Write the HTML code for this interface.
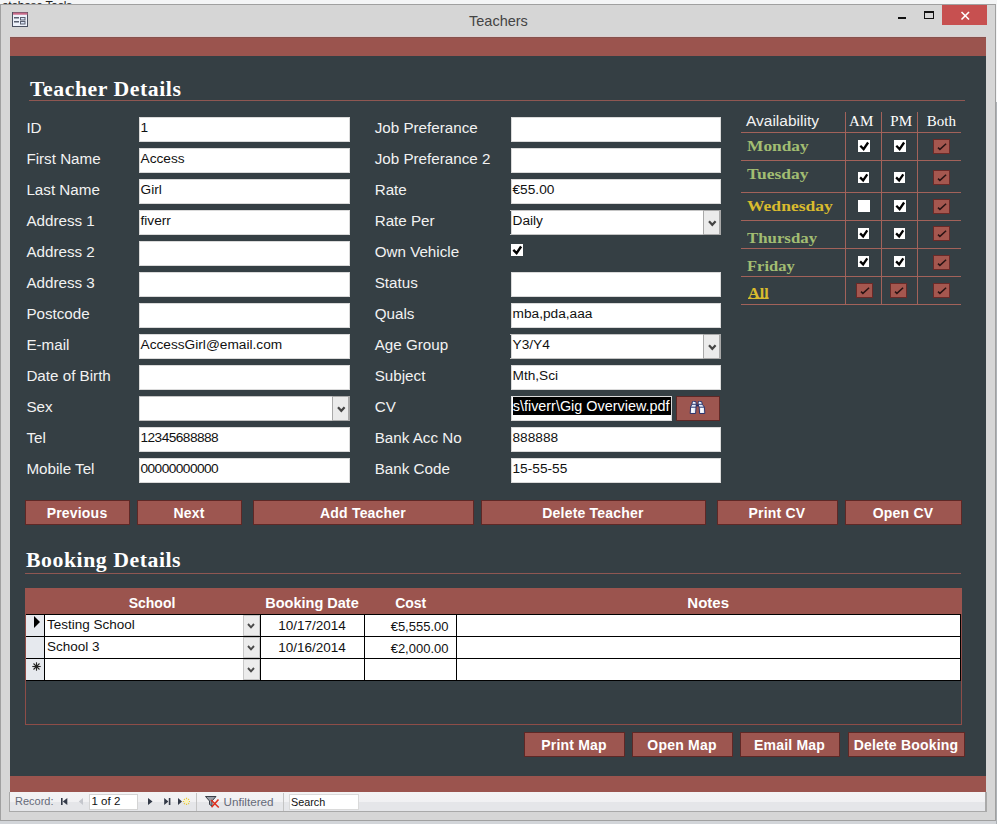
<!DOCTYPE html><html><head><meta charset="utf-8"><style>
html,body{margin:0;padding:0;width:997px;height:824px;overflow:hidden;position:relative;font-family:"Liberation Sans",sans-serif}
.b{position:absolute}
.t{position:absolute;white-space:nowrap;line-height:1}
</style></head><body>
<div class="b" style="left:0px;top:0px;width:997px;height:824px;background:#f4f5f6"></div>
<div class="t" style="left:2px;top:-0.36px;font-size:12px;font-family:'Liberation Sans', sans-serif;font-weight:normal;color:#222;letter-spacing:-0.3px">atabase Tools</div>
<div class="b" style="left:0px;top:4px;width:996px;height:817px;background:#d6d6d6;border:1px solid #9c9c9c;box-sizing:border-box"></div>
<div class="b" style="left:0px;top:821px;width:997px;height:3px;background:#d2d5d9"></div>
<div class="b" style="left:996px;top:102px;width:1px;height:722px;background:#aeb2b6"></div>
<div class="b" style="left:0px;top:4px;width:996px;height:817px;border:1px solid #a0a0a0;box-sizing:border-box"></div>
<div class="b" style="left:942px;top:5px;width:45px;height:20px;background:#c75050"></div>
<svg class="b" style="left:0;top:0" width="997" height="40"><g stroke="#fff" stroke-width="1.6"><line x1="961.5" y1="12" x2="969" y2="19.5"/><line x1="969" y1="12" x2="961.5" y2="19.5"/></g><rect x="898" y="17" width="8" height="2" fill="#111"/><rect x="924.5" y="11.5" width="9" height="7" fill="none" stroke="#111" stroke-width="1"/><rect x="924" y="11" width="10" height="2" fill="#111"/><rect x="12.5" y="12.5" width="15" height="14" fill="#eef2fb" stroke="#4a5060" stroke-width="1"/><rect x="13" y="12.5" width="14.5" height="2.2" fill="#c86a88"/><rect x="14" y="17" width="5" height="1.5" fill="#5a6070"/><rect x="14" y="21" width="5" height="1.5" fill="#5a6070"/><rect x="20.5" y="17.5" width="4.5" height="2.5" fill="#dde6f8" stroke="#5a6070"/><rect x="20.5" y="21.5" width="4.5" height="2.5" fill="#dde6f8" stroke="#5a6070"/></svg>
<div class="t" style="left:469px;top:13.73px;font-size:14.5px;font-family:'Liberation Sans', sans-serif;font-weight:normal;color:#444;">Teachers</div>
<div class="b" style="left:10px;top:36px;width:976px;height:1px;background:#dccfd0"></div>
<div class="b" style="left:10px;top:37px;width:976px;height:19px;background:#9b544e"></div>
<div class="b" style="left:10px;top:37px;width:976px;height:1px;background:#86524d"></div>
<div class="b" style="left:10px;top:56px;width:976px;height:720px;background:#353f44"></div>
<div class="b" style="left:10px;top:776px;width:976px;height:16px;background:#9b544e"></div>
<div class="t" style="left:30px;top:78.78px;font-size:21.75px;font-family:'Liberation Serif', serif;font-weight:bold;color:#fff;letter-spacing:0.55px">Teacher Details</div>
<div class="b" style="left:29px;top:100px;width:936px;height:1px;background:#8f5752"></div>
<div class="t" style="left:26.4px;top:120.03px;font-size:15.2px;font-family:'Liberation Sans', sans-serif;font-weight:normal;color:#f2f2f2;">ID</div>
<div class="b" style="left:139px;top:117px;width:211px;height:25px;background:#fff;border:1px solid #dadada;box-sizing:border-box"></div>
<div class="t" style="left:140.5px;top:120.70px;font-size:13.7px;font-family:'Liberation Sans', sans-serif;font-weight:normal;color:#111;">1</div>
<div class="t" style="left:26.4px;top:151.03px;font-size:15.2px;font-family:'Liberation Sans', sans-serif;font-weight:normal;color:#f2f2f2;">First Name</div>
<div class="b" style="left:139px;top:148px;width:211px;height:25px;background:#fff;border:1px solid #dadada;box-sizing:border-box"></div>
<div class="t" style="left:140.5px;top:151.70px;font-size:13.7px;font-family:'Liberation Sans', sans-serif;font-weight:normal;color:#111;">Access</div>
<div class="t" style="left:26.4px;top:182.03px;font-size:15.2px;font-family:'Liberation Sans', sans-serif;font-weight:normal;color:#f2f2f2;">Last Name</div>
<div class="b" style="left:139px;top:179px;width:211px;height:25px;background:#fff;border:1px solid #dadada;box-sizing:border-box"></div>
<div class="t" style="left:140.5px;top:182.70px;font-size:13.7px;font-family:'Liberation Sans', sans-serif;font-weight:normal;color:#111;">Girl</div>
<div class="t" style="left:26.4px;top:213.03px;font-size:15.2px;font-family:'Liberation Sans', sans-serif;font-weight:normal;color:#f2f2f2;">Address 1</div>
<div class="b" style="left:139px;top:210px;width:211px;height:25px;background:#fff;border:1px solid #dadada;box-sizing:border-box"></div>
<div class="t" style="left:140.5px;top:213.70px;font-size:13.7px;font-family:'Liberation Sans', sans-serif;font-weight:normal;color:#111;">fiverr</div>
<div class="t" style="left:26.4px;top:244.03px;font-size:15.2px;font-family:'Liberation Sans', sans-serif;font-weight:normal;color:#f2f2f2;">Address 2</div>
<div class="b" style="left:139px;top:241px;width:211px;height:25px;background:#fff;border:1px solid #dadada;box-sizing:border-box"></div>
<div class="t" style="left:26.4px;top:275.03px;font-size:15.2px;font-family:'Liberation Sans', sans-serif;font-weight:normal;color:#f2f2f2;">Address 3</div>
<div class="b" style="left:139px;top:272px;width:211px;height:25px;background:#fff;border:1px solid #dadada;box-sizing:border-box"></div>
<div class="t" style="left:26.4px;top:306.03px;font-size:15.2px;font-family:'Liberation Sans', sans-serif;font-weight:normal;color:#f2f2f2;">Postcode</div>
<div class="b" style="left:139px;top:303px;width:211px;height:25px;background:#fff;border:1px solid #dadada;box-sizing:border-box"></div>
<div class="t" style="left:26.4px;top:337.03px;font-size:15.2px;font-family:'Liberation Sans', sans-serif;font-weight:normal;color:#f2f2f2;">E-mail</div>
<div class="b" style="left:139px;top:334px;width:211px;height:25px;background:#fff;border:1px solid #dadada;box-sizing:border-box"></div>
<div class="t" style="left:140.5px;top:337.70px;font-size:13.7px;font-family:'Liberation Sans', sans-serif;font-weight:normal;color:#111;">AccessGirl@email.com</div>
<div class="t" style="left:26.4px;top:368.03px;font-size:15.2px;font-family:'Liberation Sans', sans-serif;font-weight:normal;color:#f2f2f2;">Date of Birth</div>
<div class="b" style="left:139px;top:365px;width:211px;height:25px;background:#fff;border:1px solid #dadada;box-sizing:border-box"></div>
<div class="t" style="left:26.4px;top:399.03px;font-size:15.2px;font-family:'Liberation Sans', sans-serif;font-weight:normal;color:#f2f2f2;">Sex</div>
<div class="b" style="left:139px;top:396px;width:211px;height:25px;background:#fff;border:1px solid #dadada;box-sizing:border-box"></div>
<div class="b" style="left:139px;top:396px;width:211px;height:25px;border-top:1px solid #c4c4c4;border-bottom:1px solid #c4c4c4;box-sizing:border-box"></div>
<div class="b" style="left:332px;top:396px;width:18px;height:25px;background:#ebebeb;border:1px solid #a9a9a9;border-right-width:2px;box-sizing:border-box"></div>
<svg class="b" style="left:336.5px;top:405.5px" width="9" height="8"><path d="M1 1.2 L4.3 4.8 L7.6 1.2" fill="none" stroke="#444" stroke-width="2.2"/></svg>
<div class="t" style="left:26.4px;top:430.03px;font-size:15.2px;font-family:'Liberation Sans', sans-serif;font-weight:normal;color:#f2f2f2;">Tel</div>
<div class="b" style="left:139px;top:427px;width:211px;height:25px;background:#fff;border:1px solid #dadada;box-sizing:border-box"></div>
<div class="t" style="left:140.5px;top:430.70px;font-size:13.7px;font-family:'Liberation Sans', sans-serif;font-weight:normal;color:#111;letter-spacing:-0.55px">12345688888</div>
<div class="t" style="left:26.4px;top:461.03px;font-size:15.2px;font-family:'Liberation Sans', sans-serif;font-weight:normal;color:#f2f2f2;">Mobile Tel</div>
<div class="b" style="left:139px;top:458px;width:211px;height:25px;background:#fff;border:1px solid #dadada;box-sizing:border-box"></div>
<div class="t" style="left:140.5px;top:461.70px;font-size:13.7px;font-family:'Liberation Sans', sans-serif;font-weight:normal;color:#111;letter-spacing:-0.55px">00000000000</div>
<div class="t" style="left:374.7px;top:120.03px;font-size:15.2px;font-family:'Liberation Sans', sans-serif;font-weight:normal;color:#f2f2f2;">Job Preferance</div>
<div class="b" style="left:511px;top:117px;width:210px;height:25px;background:#fff;border:1px solid #dadada;box-sizing:border-box"></div>
<div class="t" style="left:374.7px;top:151.03px;font-size:15.2px;font-family:'Liberation Sans', sans-serif;font-weight:normal;color:#f2f2f2;">Job Preferance 2</div>
<div class="b" style="left:511px;top:148px;width:210px;height:25px;background:#fff;border:1px solid #dadada;box-sizing:border-box"></div>
<div class="t" style="left:374.7px;top:182.03px;font-size:15.2px;font-family:'Liberation Sans', sans-serif;font-weight:normal;color:#f2f2f2;">Rate</div>
<div class="b" style="left:511px;top:179px;width:210px;height:25px;background:#fff;border:1px solid #dadada;box-sizing:border-box"></div>
<div class="t" style="left:512.5px;top:182.70px;font-size:13.7px;font-family:'Liberation Sans', sans-serif;font-weight:normal;color:#111;">€55.00</div>
<div class="t" style="left:374.7px;top:213.03px;font-size:15.2px;font-family:'Liberation Sans', sans-serif;font-weight:normal;color:#f2f2f2;">Rate Per</div>
<div class="b" style="left:511px;top:210px;width:210px;height:25px;background:#fff;border:1px solid #dadada;box-sizing:border-box"></div>
<div class="b" style="left:510px;top:210px;width:211px;height:25px;border-top:1px solid #c4c4c4;border-bottom:1px solid #c4c4c4;box-sizing:border-box"></div>
<div class="b" style="left:703px;top:210px;width:18px;height:25px;background:#ebebeb;border:1px solid #a9a9a9;border-right-width:2px;box-sizing:border-box"></div>
<svg class="b" style="left:707.5px;top:219.5px" width="9" height="8"><path d="M1 1.2 L4.3 4.8 L7.6 1.2" fill="none" stroke="#444" stroke-width="2.2"/></svg>
<div class="t" style="left:512.5px;top:213.70px;font-size:13.7px;font-family:'Liberation Sans', sans-serif;font-weight:normal;color:#111;">Daily</div>
<div class="t" style="left:374.7px;top:244.03px;font-size:15.2px;font-family:'Liberation Sans', sans-serif;font-weight:normal;color:#f2f2f2;">Own Vehicle</div>
<div class="b" style="left:511px;top:244px;width:12px;height:12px;background:#fff"></div>
<svg class="b" style="left:511px;top:244px" width="12" height="12"><path d="M2.3 5.8 L5.6 9.1 L10.1 2.5" fill="none" stroke="#000" stroke-width="2.4"/></svg>
<div class="t" style="left:374.7px;top:275.03px;font-size:15.2px;font-family:'Liberation Sans', sans-serif;font-weight:normal;color:#f2f2f2;">Status</div>
<div class="b" style="left:511px;top:272px;width:210px;height:25px;background:#fff;border:1px solid #dadada;box-sizing:border-box"></div>
<div class="t" style="left:374.7px;top:306.03px;font-size:15.2px;font-family:'Liberation Sans', sans-serif;font-weight:normal;color:#f2f2f2;">Quals</div>
<div class="b" style="left:511px;top:303px;width:210px;height:25px;background:#fff;border:1px solid #dadada;box-sizing:border-box"></div>
<div class="t" style="left:512.5px;top:306.70px;font-size:13.7px;font-family:'Liberation Sans', sans-serif;font-weight:normal;color:#111;">mba,pda,aaa</div>
<div class="t" style="left:374.7px;top:337.03px;font-size:15.2px;font-family:'Liberation Sans', sans-serif;font-weight:normal;color:#f2f2f2;">Age Group</div>
<div class="b" style="left:511px;top:334px;width:210px;height:25px;background:#fff;border:1px solid #dadada;box-sizing:border-box"></div>
<div class="b" style="left:510px;top:334px;width:211px;height:25px;border-top:1px solid #c4c4c4;border-bottom:1px solid #c4c4c4;box-sizing:border-box"></div>
<div class="b" style="left:703px;top:334px;width:18px;height:25px;background:#ebebeb;border:1px solid #a9a9a9;border-right-width:2px;box-sizing:border-box"></div>
<svg class="b" style="left:707.5px;top:343.5px" width="9" height="8"><path d="M1 1.2 L4.3 4.8 L7.6 1.2" fill="none" stroke="#444" stroke-width="2.2"/></svg>
<div class="t" style="left:512.5px;top:337.70px;font-size:13.7px;font-family:'Liberation Sans', sans-serif;font-weight:normal;color:#111;">Y3/Y4</div>
<div class="t" style="left:374.7px;top:368.03px;font-size:15.2px;font-family:'Liberation Sans', sans-serif;font-weight:normal;color:#f2f2f2;">Subject</div>
<div class="b" style="left:511px;top:365px;width:210px;height:25px;background:#fff;border:1px solid #dadada;box-sizing:border-box"></div>
<div class="t" style="left:512.5px;top:368.70px;font-size:13.7px;font-family:'Liberation Sans', sans-serif;font-weight:normal;color:#111;">Mth,Sci</div>
<div class="t" style="left:374.7px;top:399.03px;font-size:15.2px;font-family:'Liberation Sans', sans-serif;font-weight:normal;color:#f2f2f2;">CV</div>
<div class="b" style="left:511px;top:396px;width:161px;height:25px;background:#fff;border:1px solid #dadada;box-sizing:border-box"></div>
<div class="b" style="left:513px;top:397px;width:158px;height:18px;background:#000"></div>
<div class="t" style="left:513px;top:397px;width:158px;height:18px;overflow:hidden;"><div style="position:absolute;right:1.5px;top:1.61px;white-space:nowrap;font-size:14.4px;line-height:1;color:#fff;font-family:'Liberation Sans',sans-serif">Teachers\fiverr\Gig Overview.pdf</div></div>
<div class="b" style="left:676px;top:396px;width:44px;height:25px;background:#9d5650;border:1px solid #5e2826;box-sizing:border-box"></div>
<svg class="b" style="left:680px;top:396px" width="40" height="25"><g transform="translate(-680,-396)" stroke="#1e2a66" stroke-width="0.9" stroke-linejoin="round"><path d="M692.5 401.5 L695.8 401.5 L696.3 404.3 L696 407.2 L695.6 413.5 L690.2 413.5 L690.6 407.2 L691.8 404.3Z" fill="#e4ebf8"/><path d="M698.3 401.5 L701.6 401.5 L702.3 404.3 L704.4 407.2 L704.8 413.5 L699.6 413.5 L699.2 407.2 L698 404.3Z" fill="#e4ebf8"/><line x1="692" y1="404.3" x2="696.3" y2="404.3"/><line x1="698" y1="404.3" x2="702.3" y2="404.3"/><line x1="690.6" y1="407.2" x2="696" y2="407.2"/><line x1="699.2" y1="407.2" x2="704.4" y2="407.2"/><path d="M696.2 405.5 L698.5 405.5" stroke-width="1.6"/></g><g transform="translate(-680,-396)"><rect x="691.5" y="408" width="2" height="4.5" fill="#fff" opacity="0.9"/><rect x="700.8" y="408" width="2" height="4.5" fill="#fff" opacity="0.9"/><rect x="693.2" y="401.7" width="1" height="1" fill="#fff"/><rect x="699.2" y="401.7" width="1" height="1" fill="#fff"/></g></svg>
<div class="t" style="left:374.7px;top:430.03px;font-size:15.2px;font-family:'Liberation Sans', sans-serif;font-weight:normal;color:#f2f2f2;">Bank Acc No</div>
<div class="b" style="left:511px;top:427px;width:210px;height:25px;background:#fff;border:1px solid #dadada;box-sizing:border-box"></div>
<div class="t" style="left:512.5px;top:430.70px;font-size:13.7px;font-family:'Liberation Sans', sans-serif;font-weight:normal;color:#111;">888888</div>
<div class="t" style="left:374.7px;top:461.03px;font-size:15.2px;font-family:'Liberation Sans', sans-serif;font-weight:normal;color:#f2f2f2;">Bank Code</div>
<div class="b" style="left:511px;top:458px;width:210px;height:25px;background:#fff;border:1px solid #dadada;box-sizing:border-box"></div>
<div class="t" style="left:512.5px;top:461.70px;font-size:13.7px;font-family:'Liberation Sans', sans-serif;font-weight:normal;color:#111;">15-55-55</div>
<div class="b" style="left:845px;top:112px;width:1px;height:192px;background:#a2625a"></div>
<div class="b" style="left:881px;top:112px;width:1px;height:192px;background:#a2625a"></div>
<div class="b" style="left:917px;top:112px;width:1px;height:192px;background:#a2625a"></div>
<div class="b" style="left:741px;top:132px;width:220px;height:1px;background:#a2625a"></div>
<div class="b" style="left:741px;top:160px;width:220px;height:1px;background:#a2625a"></div>
<div class="b" style="left:741px;top:192px;width:220px;height:1px;background:#a2625a"></div>
<div class="b" style="left:741px;top:220px;width:220px;height:1px;background:#a2625a"></div>
<div class="b" style="left:741px;top:248px;width:220px;height:1px;background:#a2625a"></div>
<div class="b" style="left:741px;top:276px;width:220px;height:1px;background:#a2625a"></div>
<div class="b" style="left:741px;top:304px;width:220px;height:1px;background:#a2625a"></div>
<div class="t" style="left:746px;top:113.38px;font-size:15.5px;font-family:'Liberation Sans', sans-serif;font-weight:normal;color:#f2f2f2;">Availability</div>
<div class="t" style="left:561.2px;width:600px;text-align:center;top:113.54px;font-size:15px;font-family:'Liberation Serif', serif;font-weight:normal;color:#fff;">AM</div>
<div class="t" style="left:601.2px;width:600px;text-align:center;top:113.54px;font-size:15px;font-family:'Liberation Serif', serif;font-weight:normal;color:#fff;">PM</div>
<div class="t" style="left:641.4px;width:600px;text-align:center;top:113.54px;font-size:15px;font-family:'Liberation Serif', serif;font-weight:normal;color:#fff;">Both</div>
<div class="t" style="left:747px;top:139.44px;font-size:15px;font-family:'Liberation Serif', serif;font-weight:bold;color:#a2bd72;transform:scaleX(1.157);transform-origin:0 0">Monday</div>
<div class="b" style="left:857.5px;top:140px;width:12px;height:12px;background:#fff"></div>
<svg class="b" style="left:857.5px;top:140px" width="12" height="12"><path d="M2.30 5.80 L5.60 9.10 L10.10 2.50" fill="none" stroke="#000" stroke-width="2.3"/></svg>
<div class="b" style="left:893.5px;top:140px;width:12px;height:12px;background:#fff"></div>
<svg class="b" style="left:893.5px;top:140px" width="12" height="12"><path d="M2.30 5.80 L5.60 9.10 L10.10 2.50" fill="none" stroke="#000" stroke-width="2.3"/></svg>
<div class="b" style="left:933px;top:139px;width:17px;height:15px;background:#a5574f;border:1px solid #6a2a28;box-sizing:border-box"></div>
<svg class="b" style="left:933px;top:139px" width="17" height="15"><path d="M5 8.6 L6.9 10.4 L13.1 4.8" fill="none" stroke="#2a1414" stroke-width="1.5"/></svg>
<div class="t" style="left:747px;top:167.24px;font-size:15px;font-family:'Liberation Serif', serif;font-weight:bold;color:#a2bd72;transform:scaleX(1.164);transform-origin:0 0">Tuesday</div>
<div class="b" style="left:857.5px;top:172px;width:11px;height:11px;background:#fff"></div>
<svg class="b" style="left:857.5px;top:172px" width="11" height="11"><path d="M2.11 5.32 L5.13 8.34 L9.26 2.29" fill="none" stroke="#000" stroke-width="2.3"/></svg>
<div class="b" style="left:893.5px;top:172px;width:11px;height:11px;background:#fff"></div>
<svg class="b" style="left:893.5px;top:172px" width="11" height="11"><path d="M2.11 5.32 L5.13 8.34 L9.26 2.29" fill="none" stroke="#000" stroke-width="2.3"/></svg>
<div class="b" style="left:933px;top:170px;width:17px;height:15px;background:#a5574f;border:1px solid #6a2a28;box-sizing:border-box"></div>
<svg class="b" style="left:933px;top:170px" width="17" height="15"><path d="M5 8.6 L6.9 10.4 L13.1 4.8" fill="none" stroke="#2a1414" stroke-width="1.5"/></svg>
<div class="t" style="left:747px;top:199.14px;font-size:15px;font-family:'Liberation Serif', serif;font-weight:bold;color:#d9bb2e;transform:scaleX(1.17);transform-origin:0 0">Wednesday</div>
<div class="b" style="left:857.5px;top:200px;width:12px;height:12px;background:#fff"></div>
<div class="b" style="left:893.5px;top:200px;width:12px;height:12px;background:#fff"></div>
<svg class="b" style="left:893.5px;top:200px" width="12" height="12"><path d="M2.30 5.80 L5.60 9.10 L10.10 2.50" fill="none" stroke="#000" stroke-width="2.3"/></svg>
<div class="b" style="left:933px;top:199px;width:17px;height:15px;background:#a5574f;border:1px solid #6a2a28;box-sizing:border-box"></div>
<svg class="b" style="left:933px;top:199px" width="17" height="15"><path d="M5 8.6 L6.9 10.4 L13.1 4.8" fill="none" stroke="#2a1414" stroke-width="1.5"/></svg>
<div class="t" style="left:747px;top:231.34px;font-size:15px;font-family:'Liberation Serif', serif;font-weight:bold;color:#a2bd72;transform:scaleX(1.12);transform-origin:0 0">Thursday</div>
<div class="b" style="left:857.5px;top:228px;width:11px;height:11px;background:#fff"></div>
<svg class="b" style="left:857.5px;top:228px" width="11" height="11"><path d="M2.11 5.32 L5.13 8.34 L9.26 2.29" fill="none" stroke="#000" stroke-width="2.3"/></svg>
<div class="b" style="left:893.5px;top:228px;width:11px;height:11px;background:#fff"></div>
<svg class="b" style="left:893.5px;top:228px" width="11" height="11"><path d="M2.11 5.32 L5.13 8.34 L9.26 2.29" fill="none" stroke="#000" stroke-width="2.3"/></svg>
<div class="b" style="left:933px;top:226px;width:17px;height:15px;background:#a5574f;border:1px solid #6a2a28;box-sizing:border-box"></div>
<svg class="b" style="left:933px;top:226px" width="17" height="15"><path d="M5 8.6 L6.9 10.4 L13.1 4.8" fill="none" stroke="#2a1414" stroke-width="1.5"/></svg>
<div class="t" style="left:747px;top:259.44px;font-size:15px;font-family:'Liberation Serif', serif;font-weight:bold;color:#a2bd72;transform:scaleX(1.1);transform-origin:0 0">Friday</div>
<div class="b" style="left:857.5px;top:256px;width:11px;height:11px;background:#fff"></div>
<svg class="b" style="left:857.5px;top:256px" width="11" height="11"><path d="M2.11 5.32 L5.13 8.34 L9.26 2.29" fill="none" stroke="#000" stroke-width="2.3"/></svg>
<div class="b" style="left:893.5px;top:256px;width:11px;height:11px;background:#fff"></div>
<svg class="b" style="left:893.5px;top:256px" width="11" height="11"><path d="M2.11 5.32 L5.13 8.34 L9.26 2.29" fill="none" stroke="#000" stroke-width="2.3"/></svg>
<div class="b" style="left:933px;top:255px;width:17px;height:15px;background:#a5574f;border:1px solid #6a2a28;box-sizing:border-box"></div>
<svg class="b" style="left:933px;top:255px" width="17" height="15"><path d="M5 8.6 L6.9 10.4 L13.1 4.8" fill="none" stroke="#2a1414" stroke-width="1.5"/></svg>
<div class="t" style="left:747.5px;top:286.44px;font-size:15px;font-family:'Liberation Serif', serif;font-weight:bold;color:#d9bb2e;transform:scaleX(1.08);transform-origin:0 0;text-decoration:underline;text-decoration-thickness:1px;text-underline-offset:0px">All</div>
<div class="b" style="left:856px;top:283px;width:17px;height:15px;background:#a5574f;border:1px solid #6a2a28;box-sizing:border-box"></div>
<svg class="b" style="left:856px;top:283px" width="17" height="15"><path d="M5 8.6 L6.9 10.4 L13.1 4.8" fill="none" stroke="#2a1414" stroke-width="1.5"/></svg>
<div class="b" style="left:890px;top:283px;width:17px;height:15px;background:#a5574f;border:1px solid #6a2a28;box-sizing:border-box"></div>
<svg class="b" style="left:890px;top:283px" width="17" height="15"><path d="M5 8.6 L6.9 10.4 L13.1 4.8" fill="none" stroke="#2a1414" stroke-width="1.5"/></svg>
<div class="b" style="left:933px;top:283px;width:17px;height:15px;background:#a5574f;border:1px solid #6a2a28;box-sizing:border-box"></div>
<svg class="b" style="left:933px;top:283px" width="17" height="15"><path d="M5 8.6 L6.9 10.4 L13.1 4.8" fill="none" stroke="#2a1414" stroke-width="1.5"/></svg>
<div class="b" style="left:25px;top:500px;width:105px;height:25px;background:#9d5650;border:1px solid #5e2826;box-sizing:border-box"></div>
<div class="t" style="left:-223.0px;width:600px;text-align:center;top:505.95px;font-size:14px;font-family:'Liberation Sans', sans-serif;font-weight:bold;color:#fff;letter-spacing:0.2px">Previous</div>
<div class="b" style="left:137px;top:500px;width:105px;height:25px;background:#9d5650;border:1px solid #5e2826;box-sizing:border-box"></div>
<div class="t" style="left:-111.0px;width:600px;text-align:center;top:505.95px;font-size:14px;font-family:'Liberation Sans', sans-serif;font-weight:bold;color:#fff;letter-spacing:0.2px">Next</div>
<div class="b" style="left:253px;top:500px;width:221px;height:25px;background:#9d5650;border:1px solid #5e2826;box-sizing:border-box"></div>
<div class="t" style="left:63.0px;width:600px;text-align:center;top:505.95px;font-size:14px;font-family:'Liberation Sans', sans-serif;font-weight:bold;color:#fff;letter-spacing:0.2px">Add Teacher</div>
<div class="b" style="left:481px;top:500px;width:225px;height:25px;background:#9d5650;border:1px solid #5e2826;box-sizing:border-box"></div>
<div class="t" style="left:293.0px;width:600px;text-align:center;top:505.95px;font-size:14px;font-family:'Liberation Sans', sans-serif;font-weight:bold;color:#fff;letter-spacing:0.2px">Delete Teacher</div>
<div class="b" style="left:717px;top:500px;width:121px;height:25px;background:#9d5650;border:1px solid #5e2826;box-sizing:border-box"></div>
<div class="t" style="left:477.0px;width:600px;text-align:center;top:505.95px;font-size:14px;font-family:'Liberation Sans', sans-serif;font-weight:bold;color:#fff;letter-spacing:0.2px">Print CV</div>
<div class="b" style="left:845px;top:500px;width:117px;height:25px;background:#9d5650;border:1px solid #5e2826;box-sizing:border-box"></div>
<div class="t" style="left:603.0px;width:600px;text-align:center;top:505.95px;font-size:14px;font-family:'Liberation Sans', sans-serif;font-weight:bold;color:#fff;letter-spacing:0.2px">Open CV</div>
<div class="t" style="left:26px;top:550.18px;font-size:21.75px;font-family:'Liberation Serif', serif;font-weight:bold;color:#fff;letter-spacing:0.55px">Booking Details</div>
<div class="b" style="left:25px;top:573px;width:936px;height:1px;background:#8f5752"></div>
<div class="b" style="left:25px;top:588px;width:937px;height:137px;border:1px solid #8e4d48;box-sizing:border-box"></div>
<div class="b" style="left:25px;top:588px;width:937px;height:26px;background:#9b544e"></div>
<div class="t" style="left:-148px;width:600px;text-align:center;top:596.15px;font-size:14px;font-family:'Liberation Sans', sans-serif;font-weight:bold;color:#fff;">School</div>
<div class="t" style="left:12px;width:600px;text-align:center;top:595.73px;font-size:14.5px;font-family:'Liberation Sans', sans-serif;font-weight:bold;color:#fff;">Booking Date</div>
<div class="t" style="left:110.69999999999999px;width:600px;text-align:center;top:596.15px;font-size:14px;font-family:'Liberation Sans', sans-serif;font-weight:bold;color:#fff;">Cost</div>
<div class="t" style="left:408.20000000000005px;width:600px;text-align:center;top:595.30px;font-size:15px;font-family:'Liberation Sans', sans-serif;font-weight:bold;color:#fff;">Notes</div>
<div class="b" style="left:26px;top:614px;width:935px;height:67px;background:#fff;border:1px solid #000;box-sizing:border-box"></div>
<div class="b" style="left:26px;top:615px;width:18px;height:65px;background:#e6e9ee"></div>
<div class="b" style="left:26px;top:636px;width:935px;height:1px;background:#000"></div>
<div class="b" style="left:26px;top:658px;width:935px;height:1px;background:#000"></div>
<div class="b" style="left:44px;top:614px;width:1px;height:67px;background:#000"></div>
<div class="b" style="left:260px;top:614px;width:1px;height:67px;background:#000"></div>
<div class="b" style="left:364px;top:614px;width:1px;height:67px;background:#000"></div>
<div class="b" style="left:456px;top:614px;width:1px;height:67px;background:#000"></div>
<div class="b" style="left:243px;top:615px;width:17px;height:21px;background:#ececec;border:1px solid #c8c8c8;box-sizing:border-box"></div>
<svg class="b" style="left:247px;top:623px" width="8" height="6"><path d="M1 1 L4 4.3 L7 1" fill="none" stroke="#4a4a4a" stroke-width="1.9"/></svg>
<div class="t" style="left:47px;top:617.57px;font-size:13.5px;font-family:'Liberation Sans', sans-serif;font-weight:normal;color:#111;">Testing School</div>
<div class="t" style="left:12px;width:600px;text-align:center;top:619.27px;font-size:13.5px;font-family:'Liberation Sans', sans-serif;font-weight:normal;color:#111;">10/17/2014</div>
<div class="t" style="left:300px;width:148.5px;text-align:right;top:619.70px;font-size:13px;color:#111">€5,555.00</div>
<div class="b" style="left:243px;top:637px;width:17px;height:21px;background:#ececec;border:1px solid #c8c8c8;box-sizing:border-box"></div>
<svg class="b" style="left:247px;top:645px" width="8" height="6"><path d="M1 1 L4 4.3 L7 1" fill="none" stroke="#4a4a4a" stroke-width="1.9"/></svg>
<div class="t" style="left:47px;top:639.57px;font-size:13.5px;font-family:'Liberation Sans', sans-serif;font-weight:normal;color:#111;">School 3</div>
<div class="t" style="left:12px;width:600px;text-align:center;top:641.27px;font-size:13.5px;font-family:'Liberation Sans', sans-serif;font-weight:normal;color:#111;">10/16/2014</div>
<div class="t" style="left:300px;width:148.5px;text-align:right;top:641.70px;font-size:13px;color:#111">€2,000.00</div>
<div class="b" style="left:243px;top:659px;width:17px;height:21px;background:#ececec;border:1px solid #c8c8c8;box-sizing:border-box"></div>
<svg class="b" style="left:247px;top:667px" width="8" height="6"><path d="M1 1 L4 4.3 L7 1" fill="none" stroke="#4a4a4a" stroke-width="1.9"/></svg>
<svg class="b" style="left:33px;top:616px" width="8" height="12"><path d="M1 0 L7 6 L1 12Z" fill="#000"/></svg>
<svg class="b" style="left:31px;top:661px" width="12" height="12"><g stroke="#222" stroke-width="1.1"><line x1="5.5" y1="1.3" x2="5.5" y2="9.7"/><line x1="1.3" y1="5.5" x2="9.7" y2="5.5"/><line x1="2.5" y1="2.5" x2="8.5" y2="8.5"/><line x1="8.5" y1="2.5" x2="2.5" y2="8.5"/></g></svg>
<div class="b" style="left:524px;top:732px;width:101px;height:25px;background:#9d5650;border:1px solid #5e2826;box-sizing:border-box"></div>
<div class="t" style="left:274.0px;width:600px;text-align:center;top:737.95px;font-size:14px;font-family:'Liberation Sans', sans-serif;font-weight:bold;color:#fff;letter-spacing:0.2px">Print Map</div>
<div class="b" style="left:632px;top:732px;width:101px;height:25px;background:#9d5650;border:1px solid #5e2826;box-sizing:border-box"></div>
<div class="t" style="left:382.0px;width:600px;text-align:center;top:737.95px;font-size:14px;font-family:'Liberation Sans', sans-serif;font-weight:bold;color:#fff;letter-spacing:0.2px">Open Map</div>
<div class="b" style="left:740px;top:732px;width:100px;height:25px;background:#9d5650;border:1px solid #5e2826;box-sizing:border-box"></div>
<div class="t" style="left:489.5px;width:600px;text-align:center;top:737.95px;font-size:14px;font-family:'Liberation Sans', sans-serif;font-weight:bold;color:#fff;letter-spacing:0.2px">Email Map</div>
<div class="b" style="left:848px;top:732px;width:117px;height:25px;background:#9d5650;border:1px solid #5e2826;box-sizing:border-box"></div>
<div class="t" style="left:606.0px;width:600px;text-align:center;top:737.95px;font-size:14px;font-family:'Liberation Sans', sans-serif;font-weight:bold;color:#fff;letter-spacing:0.2px">Delete Booking</div>
<div class="b" style="left:9px;top:792px;width:978px;height:20px;background:linear-gradient(#f3f3f4 0,#f1f1f3 50%,#e5e6e9 50%,#e5e6e9 100%);border-left:1px solid #a8a8a8;border-right:2px solid #a9a9a9;border-bottom:1px solid #a9a9a9;box-sizing:border-box"></div>
<div class="t" style="left:15px;top:796.49px;font-size:11px;font-family:'Liberation Sans', sans-serif;font-weight:normal;color:#656a78;">Record:</div>
<div class="b" style="left:89px;top:794px;width:49px;height:16px;background:#fff;border:1px solid #d4d4d4;box-sizing:border-box"></div>
<div class="t" style="left:91.5px;top:796.07px;font-size:11.5px;font-family:'Liberation Sans', sans-serif;font-weight:normal;color:#111;">1 of 2</div>
<div class="b" style="left:196px;top:793px;width:1px;height:18px;background:#c4c4c4"></div>
<div class="b" style="left:283px;top:793px;width:1px;height:18px;background:#c4c4c4"></div>
<div class="t" style="left:223.5px;top:795.80px;font-size:11.7px;font-family:'Liberation Sans', sans-serif;font-weight:normal;color:#656a78;">Unfiltered</div>
<div class="b" style="left:289px;top:794px;width:70px;height:16px;background:#fff;border:1px solid #dadada;box-sizing:border-box"></div>
<div class="t" style="left:291px;top:796.56px;font-size:10.8px;font-family:'Liberation Sans', sans-serif;font-weight:normal;color:#111;">Search</div>
<svg class="b" style="left:0;top:790px" width="300" height="25"><g transform="translate(0,-790)"><rect x="61" y="798" width="1.6" height="7" fill="#333a48"/><path d="M67.3 798 L62.8 801.5 L67.3 805Z" fill="#333a48"/><path d="M83 798 L78.8 801.5 L83 805Z" fill="#c4c6cc"/><path d="M148 798 L152.5 801.5 L148 805Z" fill="#333a48"/><path d="M164.2 798 L168.4 801.5 L164.2 805Z" fill="#333a48"/><rect x="168.8" y="798" width="1.6" height="7" fill="#333a48"/><path d="M178 798 L182 801.5 L178 805Z" fill="#333a48"/><g stroke="#e9c930" stroke-width="1.2" stroke-dasharray="1.2 0.8"><line x1="186.5" y1="797.8" x2="186.5" y2="805"/><line x1="182.8" y1="801.5" x2="190.2" y2="801.5"/><line x1="184" y1="799" x2="189" y2="804"/><line x1="189" y1="799" x2="184" y2="804"/></g><rect x="185" y="800" width="3" height="3" fill="#fff6b0"/><path d="M205.5 796.5 L216 796.5 L212 801 L212 806 L209.5 804.5 L209.5 801Z" fill="#9aa0a8" stroke="#3a3f48" stroke-width="1"/><path d="M211 800 L218.8 807.5 M218.5 799.5 L211.5 807.3" stroke="#e0301e" stroke-width="1.6"/></g></svg>
</body></html>
